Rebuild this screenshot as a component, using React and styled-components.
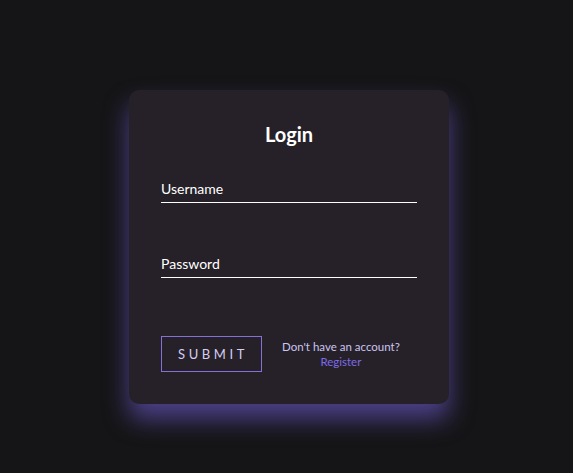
import styled, { createGlobalStyle } from 'styled-components';

const GlobalStyle = createGlobalStyle`
    html, body {
        margin: 0;
        padding: 0;
        background: #151517;
    }

    body {
        font-family: Lato, "Open Sans", sans-serif;
    }
`;

const StyledPage = styled.div`
    min-height: 100vh;
    display: flex;
    justify-content: center;
    align-items: flex-start;
    padding-top: 90px;
    padding-left: 5px;
    box-sizing: border-box;
`;

const StyledCard = styled.form`
    width: 320px;
    box-sizing: border-box;
    padding: 30px 32px 32px;
    background: #262128;
    border-radius: 10px;
    box-shadow: 0 15px 25px rgba(112, 94, 210, 0.6);
    display: flex;
    flex-direction: column;
`;

const Title = styled.h2`
    margin: 0 0 32px;
    text-align: center;
    color: #ffffff;
    font-size: 20px;
    font-weight: 700;
    line-height: 28px;
`;

const Field = styled.label`
    display: block;
    margin-bottom: ${({$last}) => ($last ? '58px' : '52px')};
    border-bottom: 1px solid #ffffff;
    padding: 0 0 5px;
`;

const FieldLabel = styled.span`
    display: block;
    color: #ffffff;
    font-size: 14px;
    line-height: 17px;
`;

const Actions = styled.div`
    display: flex;
    align-items: center;
    gap: 20px;
`;

const SubmitButton = styled.button`
    width: 101px;
    height: 36px;
    background: transparent;
    border: 1px solid #8271d6;
    color: #d4cdf4;
    font-family: Lato, "Open Sans", sans-serif;
    font-size: 13px;
    letter-spacing: 3.6px;
    text-indent: 3px;
    cursor: pointer;
`;

const AccountNote = styled.p`
    margin: 0;
    text-align: center;
    color: #cbc5f2;
    font-size: 11.5px;
    line-height: 15px;

    a {
        display: block;
        color: #7e6ae8;
        text-decoration: none;
    }
`;

export default function App() {
    return (
        <>
            <GlobalStyle />
            <StyledPage>
                <StyledCard onSubmit={(e) => e.preventDefault()}>
                    <Title>Login</Title>
                    <Field><FieldLabel>Username</FieldLabel></Field>
                    <Field $last><FieldLabel>Password</FieldLabel></Field>
                    <Actions>
                        <SubmitButton type="submit">SUBMIT</SubmitButton>
                        <AccountNote>
                            Don't have an account?
                            <a href="#">Register</a>
                        </AccountNote>
                    </Actions>
                </StyledCard>
            </StyledPage>
        </>
    );
}
